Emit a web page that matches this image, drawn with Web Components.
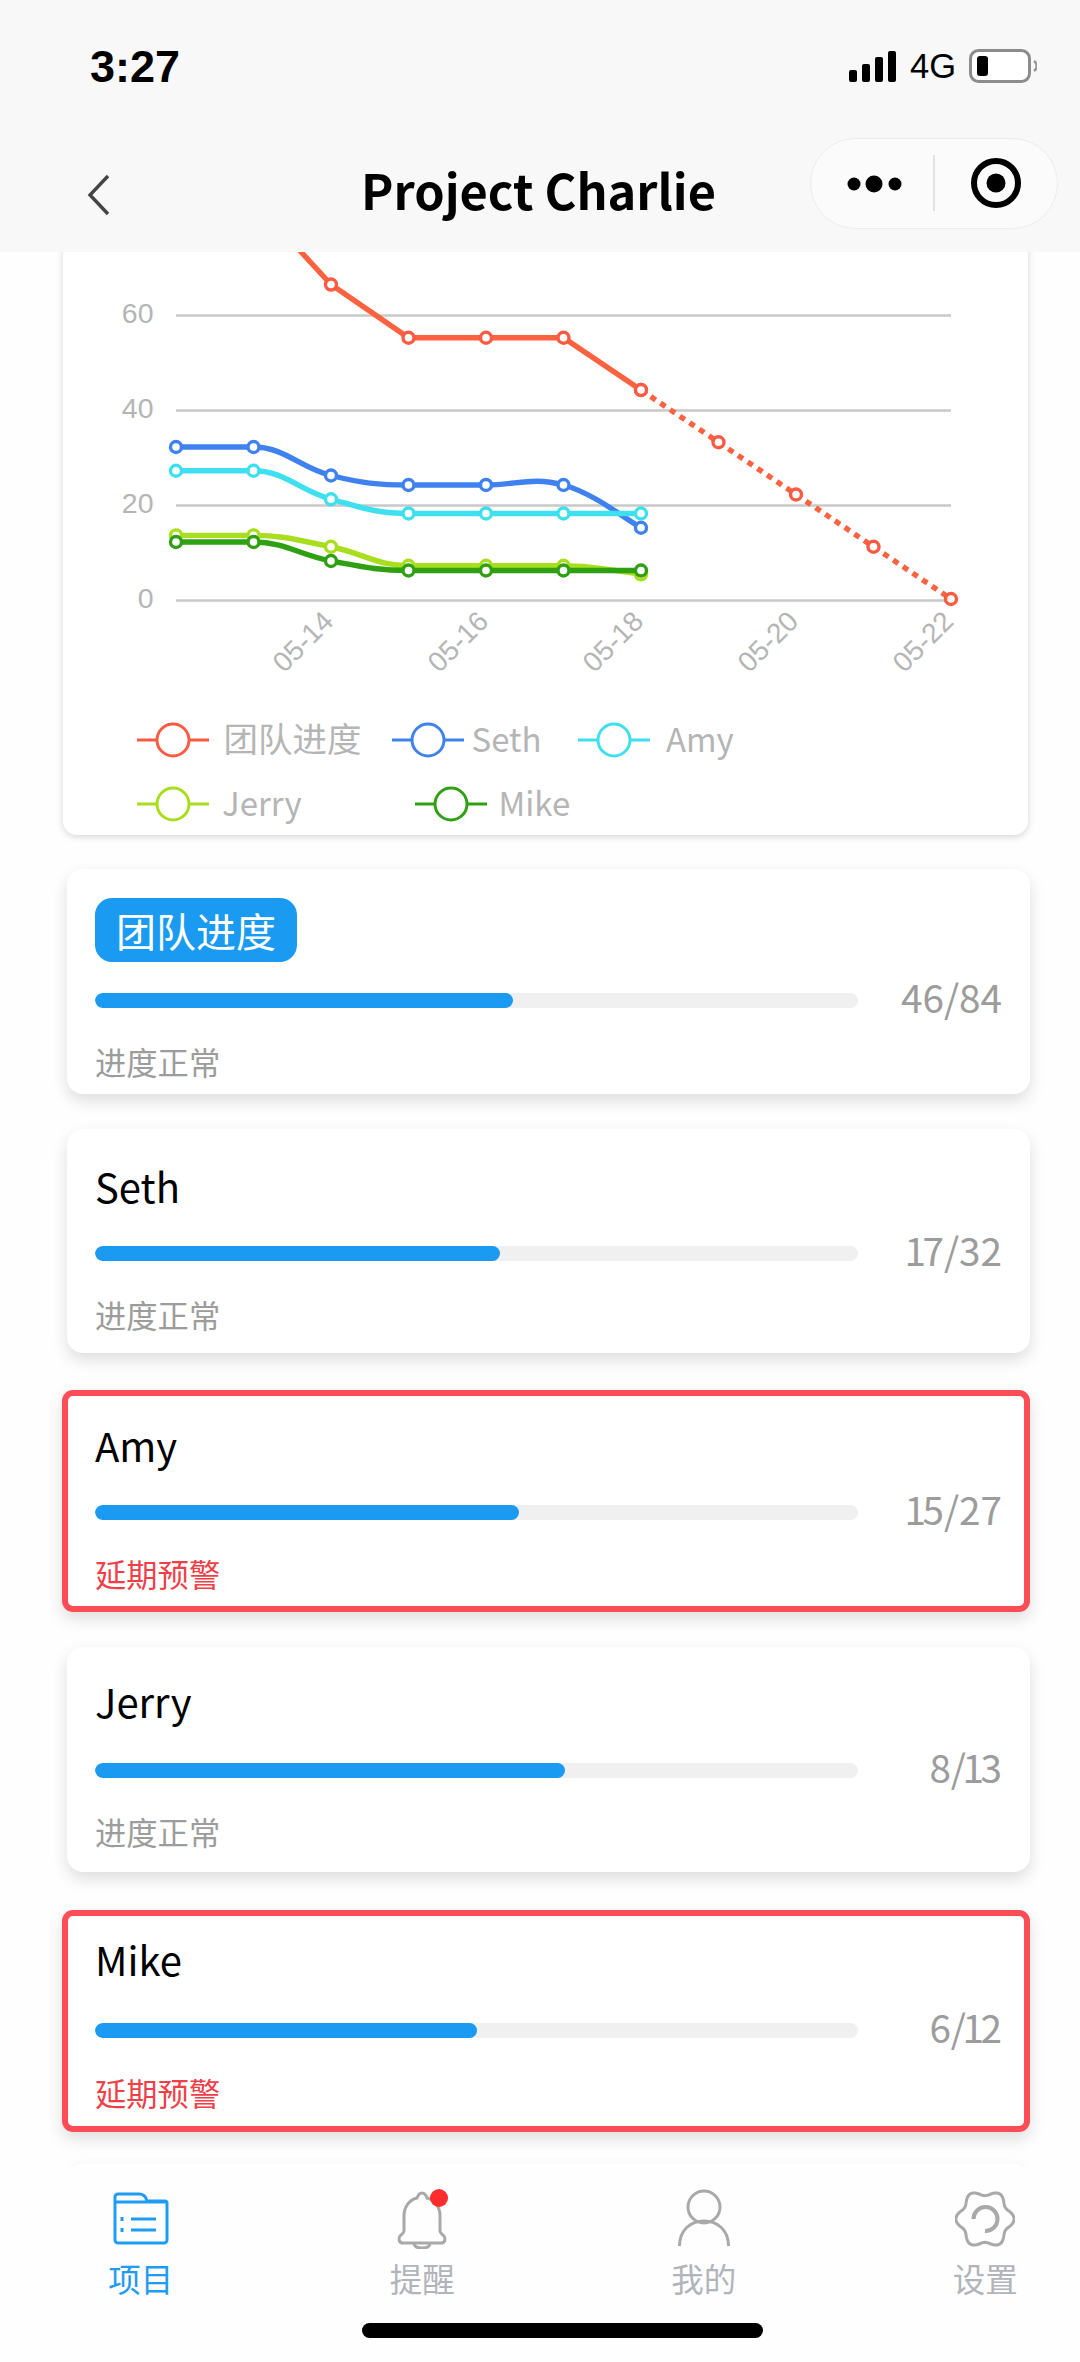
<!DOCTYPE html>
<html lang="zh"><head><meta charset="utf-8"><title>Project Charlie</title>
<style>
html,body{margin:0;padding:0;background:#fff}
body{width:1080px;height:2362px;overflow:hidden;font-family:"Noto Sans CJK SC","Noto Sans",sans-serif}
app-shell{width:1080px;height:2362px}
</style></head>
<body>
<app-shell>
  <app-header slot="header" title-text="Project Charlie"></app-header>
  <chart-card></chart-card>
  <progress-card gap="34" a="31" b="30" c="30" h="225" value="46" total="84" status="进度正常"><team-badge slot="name">团队进度</team-badge></progress-card>
  <progress-card gap="35" a="27" b="27" c="30" h="224" value="17" total="32" status="进度正常"><span slot="name">Seth</span></progress-card>
  <progress-card gap="37" a="25" b="27" c="30" h="222" value="15" total="27" status="延期预警" alert><span slot="name">Amy</span></progress-card>
  <progress-card gap="35" a="24" b="29" c="30" h="225" value="8" total="13" status="进度正常"><span slot="name">Jerry</span></progress-card>
  <progress-card gap="38" a="19" b="31" c="31" h="222" value="6" total="12" status="延期预警" alert><span slot="name">Mike</span></progress-card>
  <progress-card gap="32" a="20" b="35" c="10" h="224" value="0" total="1" status=""></progress-card>
  <tab-bar slot="tabs"></tab-bar>
</app-shell>
<script>
const FONT='"Noto Sans CJK SC","Noto Sans",sans-serif';
class AppShell extends HTMLElement{
  constructor(){super();this.attachShadow({mode:'open'}).innerHTML=`<style>
  :host{display:flex;flex-direction:column;width:1080px;height:2362px;overflow:hidden;background:#fefefe}
  main{flex:1;min-height:0;overflow:hidden;display:block}
  </style><slot name="header"></slot><main><slot></slot></main><slot name="tabs"></slot>`;}
}
class AppHeader extends HTMLElement{
  constructor(){super();this.attachShadow({mode:'open'}).innerHTML=`<style>
  :host{display:block;height:252px;background:#f8f8f8;flex:none;position:relative;z-index:2}
  .status{height:108px;display:flex;align-items:center;padding:0 43px 0 90px;box-sizing:border-box}
  .time{font:700 45px/1 "Liberation Sans",sans-serif;color:#000;margin-top:24px}
  .right{margin-left:auto;display:flex;align-items:center;gap:13px;margin-top:24px}
  .g{font:400 34.5px/1 "Liberation Sans",sans-serif;color:#000}
  .nav{display:grid;grid-template-columns:1fr auto 1fr;align-items:center;height:144px;box-sizing:border-box;padding:0 22px 0 23px}
  .nav>svg{display:block;margin:29px 0 0 64px}
  h1{margin:0;font:700 48.7px/1 ${FONT};color:#000;margin-top:18px;position:relative;left:-2px}
  .capsule{justify-self:end;width:248px;height:91px;border:1.5px solid #ececec;border-radius:46px;box-sizing:border-box;background:#fbfbfb;display:flex;align-items:center;margin-top:6px}
  .dots{width:122px;display:flex;justify-content:center;align-items:center;padding:2px 0 0 6px;box-sizing:border-box}
  .div{width:1.5px;height:56px;background:#e2e2e2}
  .tgt{flex:1;display:flex;justify-content:center}
  </style>
  <div class="status"><span class="time">3:27</span><div class="right">
    <svg width="48" height="31" viewBox="0 0 48 31"><rect x="0" y="19" width="8" height="12" rx="2"/><rect x="13" y="13" width="8" height="18" rx="2"/><rect x="26" y="6" width="8" height="25" rx="2"/><rect x="39" y="0" width="8" height="31" rx="2"/></svg>
    <span class="g">4G</span>
    <svg width="68" height="34" viewBox="0 0 68 34"><rect x="1.5" y="1.5" width="59" height="31" rx="8" fill="#fff" stroke="#8c8c8c" stroke-width="3"/><rect x="8" y="7" width="11" height="20" rx="3" fill="#000"/><path d="M65 12a6 6 0 0 1 0 10" fill="none" stroke="#999" stroke-width="2.5"/></svg>
  </div></div>
  <div class="nav">
    <svg width="24" height="42" viewBox="0 0 24 42"><path d="M21 2L3 21L21 40" fill="none" stroke="#444" stroke-width="3.4"/></svg>
    <h1>${this.getAttribute('title-text')}</h1>
    <div class="capsule">
      <div class="dots"><svg width="58" height="20" viewBox="0 0 58 20"><circle cx="8" cy="10" r="6.500"/><circle cx="28" cy="10" r="8.500"/><circle cx="49" cy="10" r="6.500"/></svg></div>
      <div class="div"></div>
      <div class="tgt"><svg width="52" height="52" viewBox="0 0 52 52"><circle cx="26" cy="26" r="22" fill="none" stroke="#000" stroke-width="6"/><circle cx="26" cy="26" r="9.500"/></svg></div>
    </div>
  </div>`;}
}
function curve(pts){
  const ext=i=>{const a=pts[i-1],b=pts[i+1];if(!a||!b)return false;const y=pts[i][1];return y>=Math.max(a[1],b[1])||y<=Math.min(a[1],b[1]);};
  const k=.2;
  let d=`M${pts[0][0]} ${pts[0][1]}`;
  for(let i=0;i<pts.length-1;i++){
    const p0=pts[Math.max(i-1,0)],p1=pts[i],p2=pts[i+1],p3=pts[Math.min(i+2,pts.length-1)];
    let ay=p1[1]+(p2[1]-p0[1])*k,by=p2[1]-(p3[1]-p1[1])*k;
    if(ext(i))ay=p1[1];
    if(ext(i+1))by=p2[1];
    d+=`C${p1[0]+(p2[0]-p0[0])*k} ${ay} ${p2[0]-(p3[0]-p1[0])*k} ${by} ${p2[0]} ${p2[1]}`;
  }
  return d;
}
class ChartCard extends HTMLElement{
  constructor(){super();
    const X=i=>176+77.5*i,Y=v=>599-4.75*v;
    const P=a=>a.map((v,i)=>[X(i),Y(v)]);
    const grid=[[60,315.5],[40,410.5],[20,505.5],[0,600.5]];
    let s='';
    for(const [l,y] of grid){
      s+=`<line x1="176" x2="951" y1="${y}" y2="${y}" stroke="#c9c9c9" stroke-width="2.4"/>`;
      s+=`<text x="153.500" y="${y+7}" text-anchor="end" class="ax">${l}</text>`;
    }
    ['05-14','05-16','05-18','05-20','05-22'].forEach((t,i)=>{const x=X(2+2*i)+4,y=623;s+=`<text transform="translate(${x} ${y}) rotate(-45)" text-anchor="end" class="ax xl">${t}</text>`});
    const mk=(pts,c,r=5.5,sw=3.4)=>pts.map(p=>`<circle cx="${p[0]}" cy="${p[1]}" r="${r}" fill="#fff" stroke="${c}" stroke-width="${sw}"/>`).join('');
    const team=P([84,84,66.2,55,55,55,44]);
    const dotted=[6,7,8,9,10].map((i,n)=>[X(i),Y(44-11*n)]);
    s+=`<path d="M${team.map(p=>p.join(' ')).join('L')}" fill="none" stroke="#fb6340" stroke-width="5.4"/>`;
    s+=`<path d="M${dotted[0].join(' ')}L${dotted[4].join(' ')}" fill="none" stroke="#fb6340" stroke-width="5.4" stroke-dasharray="6 5.700"/>`;
    s+=mk(team,'#fb5b42')+mk(dotted,'#fb5b42',5.5,3.4);
    const series=[['#3f82ef',[32,32,26,24,24.01,24,15]],['#3ee0f0',[27,27,21,18,18,18,18]],['#a9de1e',[13.4,13.4,11,7,7,7,5.2]],['#2fa012',[12,12,8,6,6,6,6]]];
    for(const [c,v] of series){const pts=P(v);s+=`<path d="${curve(pts)}" fill="none" stroke="${c}" stroke-width="5.4"/>`+mk(pts,c);}
    const leg=[[137,740,'#fb5b42','团队进度',223.5,34.5],[392,740,'#3f82ef','Seth',471.5,33],[578,740,'#3ee0f0','Amy',666,33],[137,804,'#a9de1e','Jerry',222,33],[415,804,'#2fa012','Mike',498.5,33]];
    for(const [x,y,c,t,tx,fs] of leg){
      s+=`<line x1="${x}" x2="${x+72}" y1="${y}" y2="${y}" stroke="${c}" stroke-width="3"/><circle cx="${x+36}" cy="${y}" r="16" fill="#fff" stroke="${c}" stroke-width="3"/><text x="${tx}" y="${y+12}" class="lg" font-size="${fs}">${t}</text>`;
    }
    this.attachShadow({mode:'open'}).innerHTML=`<style>
    :host{display:block;width:965px;height:603px;margin:-20px 0 0 63px;background:#fff;border-radius:14px;box-shadow:0 2px 7px rgba(0,0,0,.16);overflow:hidden}
    svg{display:block}
    .ax{font:28.500px "Liberation Sans",sans-serif;fill:#b5b5b5}
    .xl{font-size:28px}
    .lg{font-family:${FONT};fill:#b5b5b5}
    </style><svg width="965" height="603" viewBox="63 232 965 603">${s}</svg>`;
  }
}
class TeamBadge extends HTMLElement{
  constructor(){super();this.attachShadow({mode:'open'}).innerHTML=`<style>
  :host{display:inline-flex;align-items:center;justify-content:center;width:202px;height:64px;border-radius:17px;background:#1b9af2;color:#fff;font:400 40px/1 ${FONT}}
  </style><slot></slot>`;}
}
class ProgressCard extends HTMLElement{
  constructor(){super();
    const g=n=>this.getAttribute(n);
    const alert=this.hasAttribute('alert');
    const pct=g('value')/g('total')*100;
    const cnt=`${g('value')}/${g('total')}`.replace(/1/g,'<span class="one">1</span>');
    this.attachShadow({mode:'open'}).innerHTML=`<style>
    :host{display:block;box-sizing:border-box;height:${g('h')}px;margin-top:${g('gap')}px;margin-left:${alert?62:66.5}px;width:${alert?968:963.5}px;
      background:#fff;border-radius:${alert?11:16}px;box-shadow:0 7px 16px rgba(0,0,0,.13);
      padding:${alert?Number(g('a'))-6:g('a')}px 28px 0 ${alert?27:28.5}px;${alert?'border:6px solid #ff4d55;padding-right:22px':''}}
    .name{height:60px;display:flex;align-items:center;font:400 40px/1 ${FONT};color:#000}
    .row{height:20px;margin-top:${g('b')}px;display:flex;align-items:center}
    .track{width:763px;height:15px;border-radius:7.5px;background:#f0f0f0;overflow:hidden}
    .fill{height:100%;width:${pct}%;background:#1b9af2;border-radius:7.5px}
    .count{margin-left:auto;font:400 38.7px/1 ${FONT};color:#9c9c9c;margin-top:-8px}
    .one{margin:0 -3.5px}
    .status{height:44px;margin-top:${g('c')}px;display:flex;align-items:center;font:400 31.3px/1 ${FONT};color:${alert?'#ef3f49':'#9c9c9c'}}
    </style>
    <div class="name"><slot name="name"></slot></div>
    <div class="row"><div class="track"><div class="fill"></div></div><span class="count">${cnt}</span></div>
    <div class="status">${g('status')}</div>`;
    if(!g('status')) this.shadowRoot.querySelector('.row').style.visibility='hidden';
  }
}
class TabBar extends HTMLElement{
  constructor(){super();
    let gear='';for(let i=0;i<=120;i++){const a=i/120*2*Math.PI,r=26.2+2.9*Math.cos(6*a);gear+=(i?'L':'M')+(30+r*Math.cos(a)).toFixed(2)+' '+(30+r*Math.sin(a)).toFixed(2);}
    const ic={
     folder:`<svg width="60" height="60" viewBox="0 0 60 60" fill="none" stroke="#1f9bf2" stroke-width="3"><path d="M4 14V8a3 3 0 0 1 3-3h21c5 0 7 3 8 7h18a2 2 0 0 1 2 2v37a3 3 0 0 1-3 3H7a3 3 0 0 1-3-3z"/><path d="M4 13h52"/><path d="M20 30h25M20 41h25"/><path d="M9.500 30h3M9.500 41h3" stroke-width="4"/></svg>`,
     bell:`<svg width="60" height="60" viewBox="0 0 60 60" fill="none" stroke="#a9a9a9" stroke-width="3"><path d="M30 4c3 0 4 2 5 5 8 2 13 9 13 18v15c0 2 2 3 4 5 2 3 1 7-3 7H11c-4 0-5-4-3-7 2-2 4-3 4-5V27c0-9 5-16 13-18 1-3 2-5 5-5z"/><path d="M22 54c0 4 4 5 8 5s8-1 8-5"/><circle cx="47" cy="9" r="9" fill="#ff2d2d" stroke="none"/></svg>`,
     user:`<svg width="60" height="60" viewBox="0 0 60 60" fill="none" stroke="#a9a9a9" stroke-width="3"><circle cx="30" cy="18" r="16"/><path d="M5.500 57c0-16 11-25 24.500-25s24.500 9 24.500 25"/></svg>`,
     gear:`<svg width="60" height="60" viewBox="0 0 60 60" fill="none" stroke="#a9a9a9" stroke-width="3"><path d="${gear}Z"/><path d="M18.500 30A12 12 0 1 1 30 42" stroke-width="4"/></svg>`
    };
    const items=[['folder','项目',1],['bell','提醒'],['user','我的'],['gear','设置']];
    this.attachShadow({mode:'open'}).innerHTML=`<style>
    :host{display:block;height:195px;flex:none;background:#fefefe;position:relative;z-index:2;overflow:hidden}
    .tabs{display:grid;grid-template-columns:repeat(4,281.5px);margin-left:0;padding-top:22px}
    .t{display:flex;flex-direction:column;align-items:center;color:#b1b4bb;font:400 32.5px/1 ${FONT}}
    .t svg{display:block;margin-bottom:13px}
    .t.on{color:#1f9bf2}
    .home{position:absolute;left:362px;top:156px;width:401px;height:15px;background:#000;border-radius:8px}
    </style><div class="tabs">${items.map(([k,l,on])=>`<div class="t${on?' on':''}">${ic[k]}<span>${l}</span></div>`).join('')}</div><div class="home"></div>`;
  }
}
customElements.define('app-shell',AppShell);
customElements.define('app-header',AppHeader);
customElements.define('chart-card',ChartCard);
customElements.define('team-badge',TeamBadge);
customElements.define('progress-card',ProgressCard);
customElements.define('tab-bar',TabBar);
</script>
</body></html>
